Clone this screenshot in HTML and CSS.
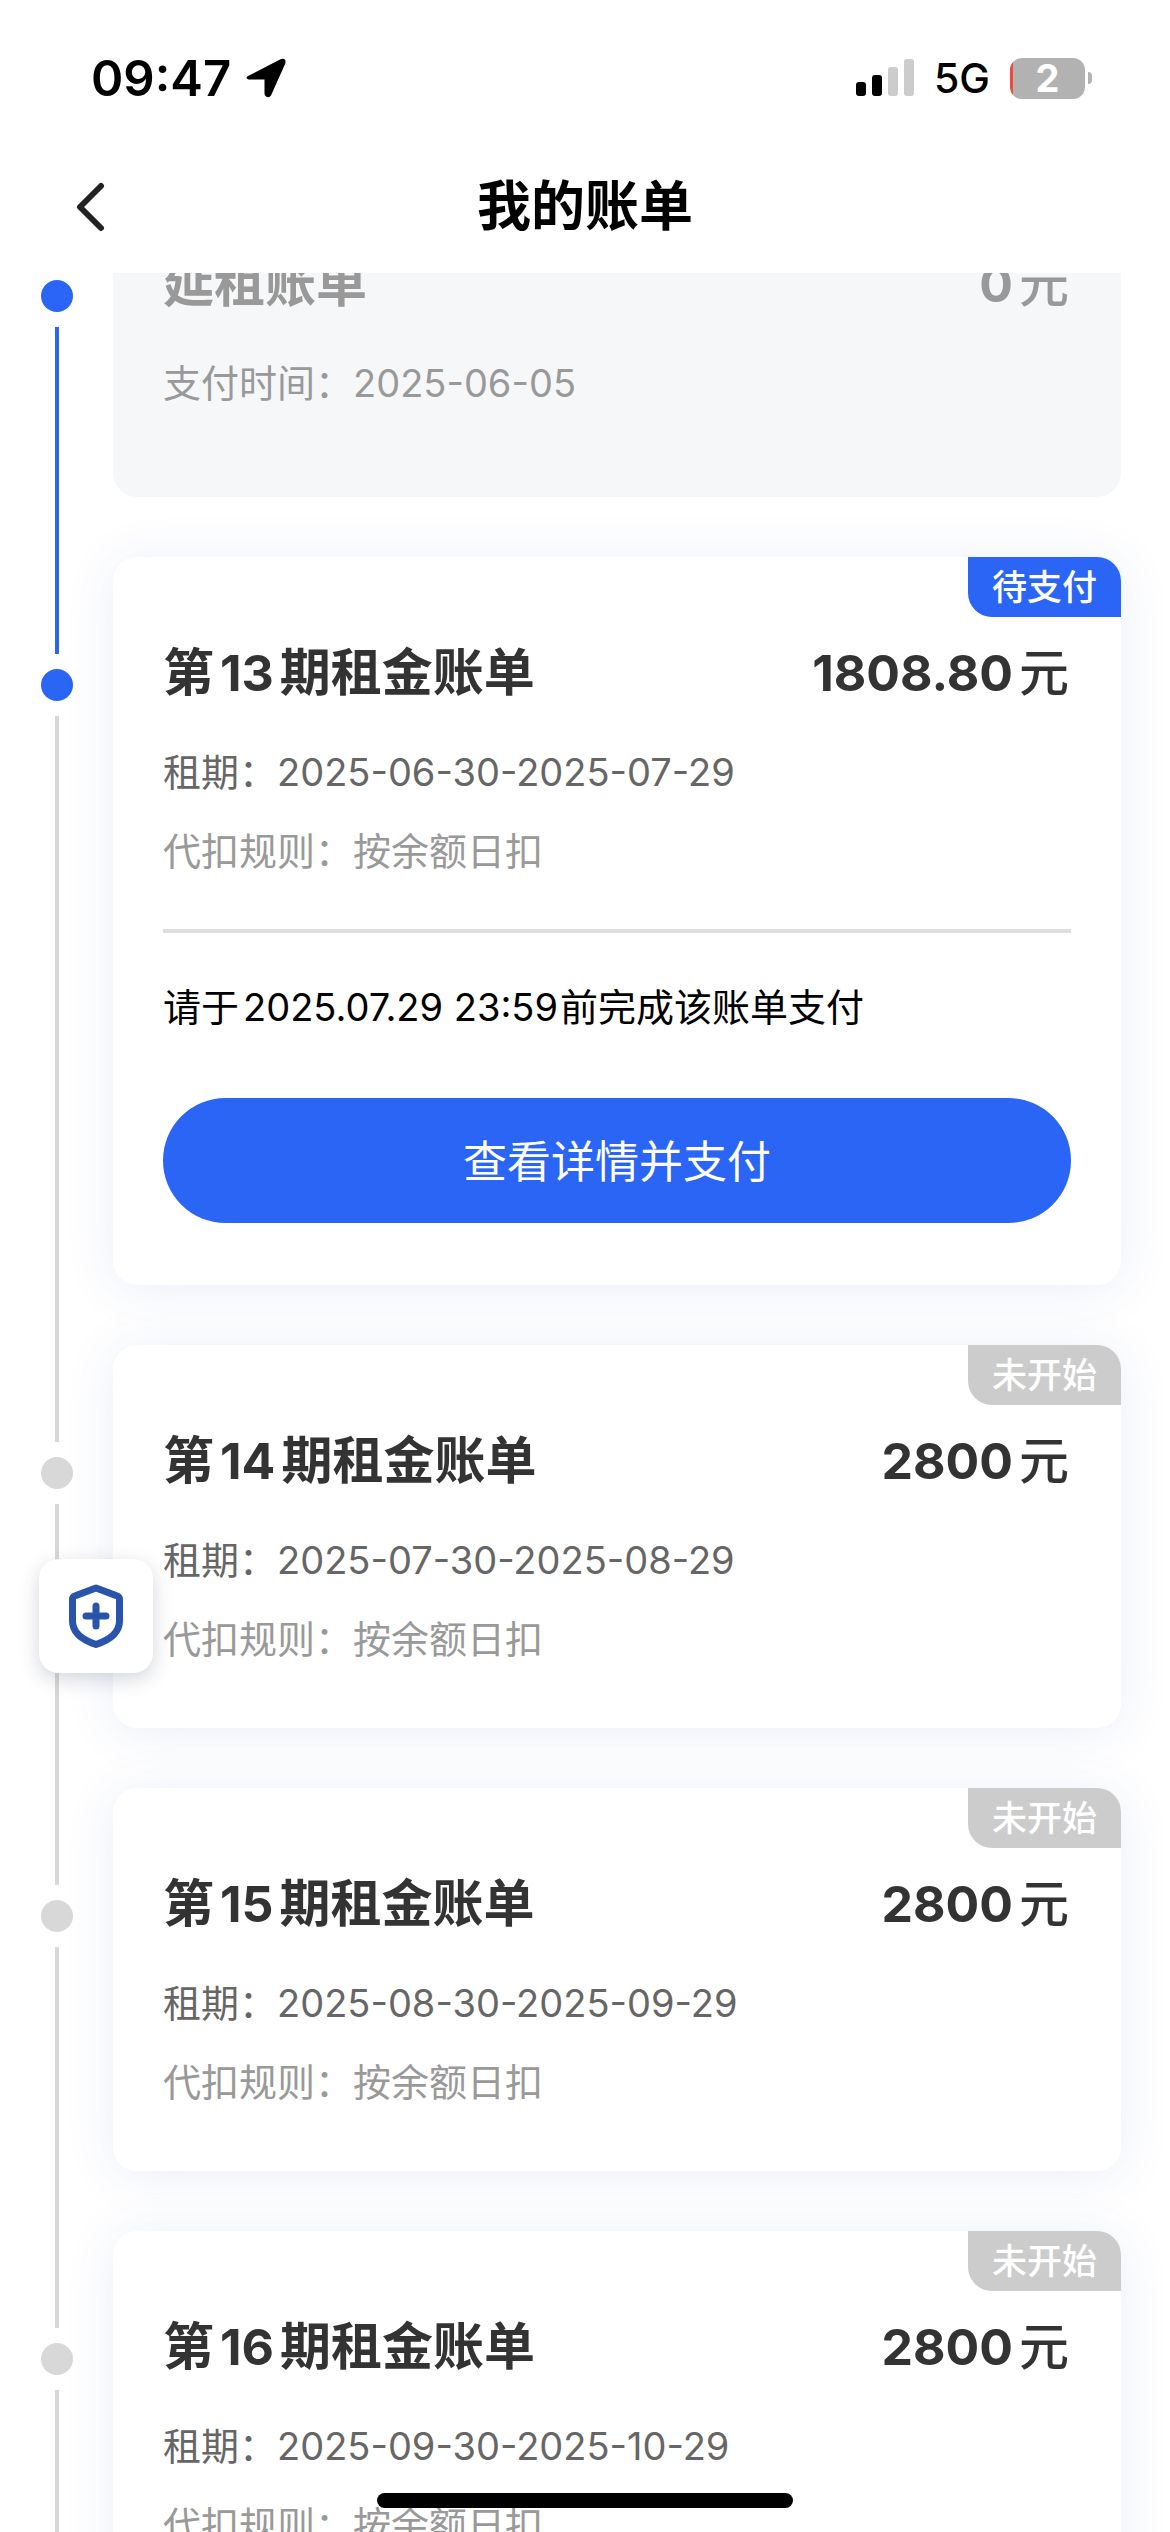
FILE: index.html
```html
<!DOCTYPE html>
<html lang="zh-CN">
<head>
<meta charset="utf-8">
<meta name="viewport" content="width=device-width">
<title>我的账单</title>
<link rel="stylesheet" href="styles.css">
</head>
<body>
<header class="header">
<div class="status-bar">
<div class="status-left">
<span class="time">09:47</span>
<svg class="location" width="40" height="40" viewBox="0 0 40 40"><path d="M3 17.500L34.500 1.200Q40.500-.5 39.300 5.500L25 37.500Q23 40.500 20 38.500Q18.500 37.500 18.500 35.500V21.500H4Q.8 21.500 .5 19.700Q.5 18.500 3 17.500Z"/></svg>
</div>
<div class="status-right">
<svg width="58" height="38" viewBox="0 0 58 38">
<rect x="0" y="23" width="10" height="14" rx="3"/>
<rect x="16" y="16" width="10" height="21" rx="3"/>
<rect x="32" y="8" width="10" height="29" rx="3" fill="#ccc"/>
<rect x="48" y="0" width="10" height="37" rx="3" fill="#ccc"/>
</svg>
<span class="network">5G</span>
<div class="battery"><span class="battery-level">2</span></div>
</div>
</div>
<nav class="nav">
<button class="back" aria-label="返回">
<svg width="30" height="50" viewBox="0 0 30 50"><path d="M26 4L5 25L26 46" fill="none" stroke="#222" stroke-width="6" stroke-linecap="round" stroke-linejoin="round"/></svg>
</button>
<h1>我的账单</h1>
</nav>
</header>

<main class="content">
<ul class="bills">
<li class="bill paid">
<div class="rail"><i class="line line-top"></i><i class="dot"></i><i class="line"></i></div>
<article class="card">
<div class="card-head"><h2>延租账单</h2><strong class="amount">0<span class="unit">元</span></strong></div>
<p class="muted">支付时间：2025-06-05</p>
</article>
</li>

<li class="bill pending">
<div class="rail"><i class="line line-top"></i><i class="dot"></i><i class="line"></i></div>
<article class="card">
<span class="badge">待支付</span>
<div class="card-head"><h2>第<span class="num">13</span>期租金账单</h2><strong class="amount">1808.80<span class="unit">元</span></strong></div>
<p>租期：2025-06-30-2025-07-29</p>
<p class="muted">代扣规则：按余额日扣</p>
<hr class="divider">
<p class="notice">请于<span class="date">2025.07.29 23:59</span>前完成该账单支付</p>
<button class="pay">查看详情并支付</button>
</article>
</li>

<li class="bill">
<div class="rail"><i class="line line-top"></i><i class="dot"></i><i class="line"></i></div>
<article class="card">
<span class="badge">未开始</span>
<div class="card-head"><h2>第<span class="num">14</span>期租金账单</h2><strong class="amount">2800<span class="unit">元</span></strong></div>
<p>租期：2025-07-30-2025-08-29</p>
<p class="muted">代扣规则：按余额日扣</p>
</article>
</li>

<li class="bill">
<div class="rail"><i class="line line-top"></i><i class="dot"></i><i class="line"></i></div>
<article class="card">
<span class="badge">未开始</span>
<div class="card-head"><h2>第<span class="num">15</span>期租金账单</h2><strong class="amount">2800<span class="unit">元</span></strong></div>
<p>租期：2025-08-30-2025-09-29</p>
<p class="muted">代扣规则：按余额日扣</p>
</article>
</li>

<li class="bill">
<div class="rail"><i class="line line-top"></i><i class="dot"></i><i class="line"></i></div>
<article class="card">
<span class="badge">未开始</span>
<div class="card-head"><h2>第<span class="num">16</span>期租金账单</h2><strong class="amount">2800<span class="unit">元</span></strong></div>
<p>租期：2025-09-30-2025-10-29</p>
<p class="muted">代扣规则：按余额日扣</p>
</article>
</li>
</ul>
</main>

<button class="shield" aria-label="安全保障">
<svg width="54" height="64" viewBox="0 0 54 64" fill="none" stroke="#2a54ac" stroke-width="7" stroke-linejoin="round" stroke-linecap="round"><path d="M27 4L47 11.500Q50.500 12.500 50.500 15V37C50.500 50 39 56.500 27 60.500C15 56.500 3.500 50 3.500 37V15Q3.500 12.500 7 11.500Z"/><path d="M27 22V42M17 32H37"/></svg>
</button>
<div class="home-indicator"></div>
</body>
</html>
```

FILE: styles.css
```css
* {
	box-sizing: border-box;
}

body {
	background-color: #fff;
	color: #333;
	display: flex;
	flex-direction: column;
	font-family: Inter, "Noto Sans CJK SC", sans-serif;
	height: 100vh;
	margin: 0;
	overflow: hidden;
}

h1, h2, p, ul {
	margin: 0;
	padding: 0;
}

button {
	border: none;
	cursor: pointer;
	font-family: inherit;
	padding: 0;
}

.header {
	background-color: #fff;
	color: #000;
	flex: none;
}

.status-bar {
	align-items: center;
	display: flex;
	height: 141px;
	justify-content: space-between;
	padding: 15px 78px 0 91px;
}

.status-left,
.status-right {
	align-items: center;
	display: flex;
}

.status-left {
	gap: 15px;
}

.status-right {
	gap: 20px;
}

.time {
	font-size: 49px;
	font-weight: 600;
}

.network {
	font-size: 41px;
	font-weight: 500;
}

.battery {
	align-items: center;
	display: flex;
	gap: 3px;
}

.battery::after {
	background-color: #b2b2b2;
	border-radius: 0 6px 6px 0;
	content: "";
	height: 12px;
	width: 4px;
}

.battery-level {
	background: linear-gradient(to right, #eb4d3d 3px, #b2b2b2 3px);
	border-radius: 12px;
	color: #fff;
	font-size: 38px;
	font-weight: 700;
	height: 41px;
	line-height: 41px;
	text-align: center;
	width: 75px;
}

.nav {
	align-items: center;
	display: grid;
	grid-template-columns: 1fr auto 1fr;
	height: 132px;
	padding: 0 75px;
}

.nav h1 {
	font-size: 54px;
	font-weight: 600;
	line-height: 66px;
}

.back {
	background-color: transparent;
	height: 50px;
	justify-self: start;
}

.content {
	flex: 1;
	overflow-y: auto;
	scrollbar-width: none;
}

.bills {
	list-style: none;
	/* list is scrolled part way under the header */
	margin-top: -105px;
	padding-right: 49px;
}

.bill {
	color: #d8d8d8;
	display: grid;
	grid-template-columns: 113px 1fr;
}

.rail {
	align-items: center;
	display: flex;
	flex-direction: column;
	gap: 15px;
	padding: 0 40px 0 41px;
}

.dot {
	background-color: currentColor;
	border-radius: 50%;
	height: 32px;
	width: 32px;
}

.line {
	background-color: currentColor;
	flex: 1;
	width: 4px;
}

.line-top {
	flex: none;
	height: 97px;
}

.paid .line,
.paid .dot,
.pending .dot,
.pending .line-top {
	background-color: #2b65f6;
}

.card {
	background-color: #fff;
	border-radius: 24px;
	box-shadow: 0 4px 50px rgba(60, 90, 180, 0.1);
	color: #666;
	margin-bottom: 60px;
	padding: 86px 50px 62px;
	position: relative;
}

.paid .card {
	background-color: #f6f7f9;
	box-shadow: none;
	padding-bottom: 87px;
}

.card-head {
	color: #333;
	display: flex;
	font-size: 50px;
	justify-content: space-between;
	line-height: 60px;
	margin-bottom: 42px;
}

.card-head h2 {
	font-size: 51px;
	font-weight: 700;
}

.num {
	font-size: 50px;
	margin: 0 6px;
}

.amount {
	margin-right: 2px;
}

.unit {
	font-weight: 500;
	margin-left: 6px;
}

.paid .card-head {
	color: #999;
}

.card p {
	font-size: 38px;
	line-height: 54px;
}

.card p + p {
	margin-top: 25px;
}

.card .muted {
	color: #999;
}

.badge {
	background-color: #ccc;
	border-radius: 0 24px;
	color: #fff;
	font-size: 35px;
	font-weight: 500;
	line-height: 60px;
	padding: 0 24px;
	position: absolute;
	right: 0;
	top: 0;
}

.pending .badge {
	background-color: #2b65f6;
}

.divider {
	background-color: #dfdfdf;
	border: none;
	height: 4px;
	margin: 51px 0 47px;
}

.card .notice {
	color: #000;
}

.date {
	margin: 0 2px 0 4px;
}

.pay {
	background-color: #2b65f6;
	border-radius: 63px;
	color: #fff;
	display: block;
	font-size: 44px;
	height: 125px;
	margin-top: 64px;
	padding-bottom: 4px;
	width: 100%;
}

.shield {
	align-items: center;
	background-color: #fff;
	border-radius: 20px;
	bottom: 859px;
	box-shadow: 0 6px 20px rgba(40, 50, 80, 0.2);
	display: flex;
	height: 114px;
	justify-content: center;
	left: 39px;
	position: fixed;
	width: 114px;
}

.home-indicator {
	background-color: #000;
	border-radius: 8px;
	bottom: 24px;
	height: 15px;
	left: 50%;
	margin-left: -208px;
	position: fixed;
	width: 416px;
}
```
